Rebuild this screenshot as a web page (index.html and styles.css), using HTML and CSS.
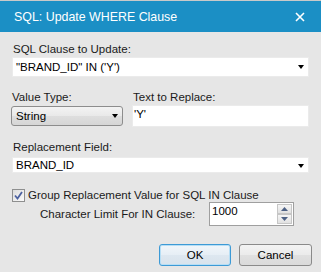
FILE: index.html
```html
<!DOCTYPE html>
<html>
<head>
<meta charset="utf-8">
<link rel="stylesheet" href="styles.css">
</head>
<body>
<div class="window">
  <div class="titlebar">
    <span class="title">SQL: Update WHERE Clause</span>
    <svg class="close" width="10" height="10" viewBox="0 0 10 10"><path d="M1 1 L9 9 M9 1 L1 9" stroke="#fff" stroke-width="1.6"/></svg>
  </div>
  <div class="content">
    <div class="label l1">SQL Clause to Update:</div>
    <div class="combo c1"><span>"BRAND_ID" IN ('Y')</span><i class="arrow"></i></div>

    <div class="row2">
      <div class="col-left">
        <div class="label">Value Type:</div>
        <div class="select"><span>String</span><i class="arrow"></i></div>
      </div>
      <div class="col-right">
        <div class="label">Text to Replace:</div>
        <div class="textbox">'Y'</div>
      </div>
    </div>

    <div class="label l3">Replacement Field:</div>
    <div class="combo c3"><span>BRAND_ID</span><i class="arrow"></i></div>

    <div class="check-row">
      <span class="checkbox"><svg width="9" height="9" viewBox="0 0 9 9"><path d="M1 4.5 L3.5 7.5 L8 1" fill="none" stroke="#4c61a0" stroke-width="1.8"/></svg></span>
      <span>Group Replacement Value for SQL IN Clause</span>
    </div>
    <div class="limit-row">
      <span class="limit-label">Character Limit For IN Clause:</span>
      <div class="spin">
        <span class="spin-val">1000</span>
        <div class="spin-btns">
          <div class="sb"><svg width="7" height="4" viewBox="0 0 7 4"><path d="M0 4 L3.5 0 L7 4Z" fill="#4d6185"/></svg></div>
          <div class="sb"><svg width="7" height="4" viewBox="0 0 7 4"><path d="M0 0 L3.5 4 L7 0Z" fill="#4d6185"/></svg></div>
        </div>
      </div>
    </div>
    <div class="buttons">
      <button class="btn ok">OK</button>
      <button class="btn">Cancel</button>
    </div>
  </div>
</div>
</body>
</html>
```

FILE: styles.css
```css
html, body {
  margin: 0;
  padding: 0;
}
body {
  width: 321px;
  height: 272px;
  background: #e6e6e6;
  font-family: "Liberation Sans", Arial, sans-serif;
  font-size: 11.5px;
  color: #1a1a1a;
  overflow: hidden;
}
.window {
  display: flex;
  flex-direction: column;
  height: 272px;
  border-top: 1px solid #c9c9c9;
  box-sizing: border-box;
}
.titlebar {
  height: 31px;
  background: #1b8fc5;
  display: flex;
  align-items: center;
  justify-content: space-between;
  padding: 1px 16px 0 14px;
  box-sizing: border-box;
}
.title {
  color: #fff;
  font-size: 12.4px;
  line-height: 20px;
}
.close {
  display: block;
}
.content {
  padding: 0 12px;
  display: flex;
  flex-direction: column;
}
.label {
  line-height: 16px;
  padding-left: 1px;
}
.l1 { margin-top: 9px; }
.combo {
  height: 20px;
  background: #fff;
  border: 1px solid #ebebeb;
  box-sizing: border-box;
  display: flex;
  align-items: center;
  justify-content: space-between;
  padding: 0 4px 0 3px;
  color: #000;
}
.c1 { width: 297px; }
.arrow {
  width: 0;
  height: 0;
  border-left: 3.5px solid transparent;
  border-right: 3.5px solid transparent;
  border-top: 4px solid #000;
}
.row2 {
  display: flex;
  gap: 9px;
  margin-top: 12px;
}
.col-left {
  width: 112px;
  margin-left: -1px;
}
.col-right {
  width: 177px;
}
.select {
  height: 20px;
  box-sizing: border-box;
  border: 1px solid #8d8d8d;
  border-radius: 3px;
  background: linear-gradient(#f3f3f3, #e9e9e9 50%, #dedede 51%, #d6d6d6);
  display: flex;
  align-items: center;
  justify-content: space-between;
  padding: 0 4px;
  margin-top: 1px;
  color: #000;
}
.textbox {
  height: 22px;
  box-sizing: border-box;
  background: #fff;
  border: 1px solid #ebebeb;
  padding: 0 1px;
  line-height: 16px;
  color: #000;
}
.l3 { margin-top: 12px; }
.c3 {
  width: 297px;
  height: 16px;
  margin-top: 2px;
  align-items: flex-start;
  line-height: 14px;
}
.c3 .arrow { margin-top: 6px; }
.check-row {
  display: flex;
  align-items: center;
  gap: 3px;
  margin-top: 15px;
  height: 14px;
}
.checkbox {
  width: 13px;
  height: 13px;
  box-sizing: border-box;
  border: 1px solid #8e8f8f;
  background: linear-gradient(135deg, #dcdcdc, #fbfbfb);
  display: flex;
  align-items: center;
  justify-content: center;
}
.checkbox svg { display: block; }
.limit-row {
  display: flex;
  align-items: center;
  padding-left: 28px;
}
.limit-label {
  width: 169px;
}
.spin {
  width: 85px;
  height: 24px;
  box-sizing: border-box;
  border: 1px solid #9f9f9f;
  background: #fff;
  display: flex;
  justify-content: space-between;
  padding: 1px 1px 1px 2px;
}
.spin-val {
  line-height: 14px;
  color: #000;
}
.spin-btns {
  display: flex;
  flex-direction: column;
}
.sb {
  width: 13px;
  height: 9px;
  border: 1px solid #c6c6c6;
  background: linear-gradient(#f5f5f5, #e1e1e1);
  display: flex;
  align-items: center;
  justify-content: center;
}
.sb svg { display: block; }
.buttons {
  display: flex;
  justify-content: flex-end;
  gap: 8px;
  margin-top: 18px;
  margin-right: -3px;
}
.btn {
  width: 73px;
  height: 22px;
  box-sizing: border-box;
  font-family: "Liberation Sans", Arial, sans-serif;
  font-size: 11.5px;
  color: #000;
  border: 1px solid #8a8a8a;
  border-radius: 3px;
  background: linear-gradient(#f3f3f3, #ebebeb 50%, #e0e0e0 51%, #dadada);
  padding: 0;
}
.ok {
  width: 72px;
  border-color: #3d9ad6;
  box-shadow: inset 0 0 0 1px #b6def5;
  background: linear-gradient(#f1f6fa, #e6eef5 50%, #dde7f0 51%, #d8e3ec);
}
```
